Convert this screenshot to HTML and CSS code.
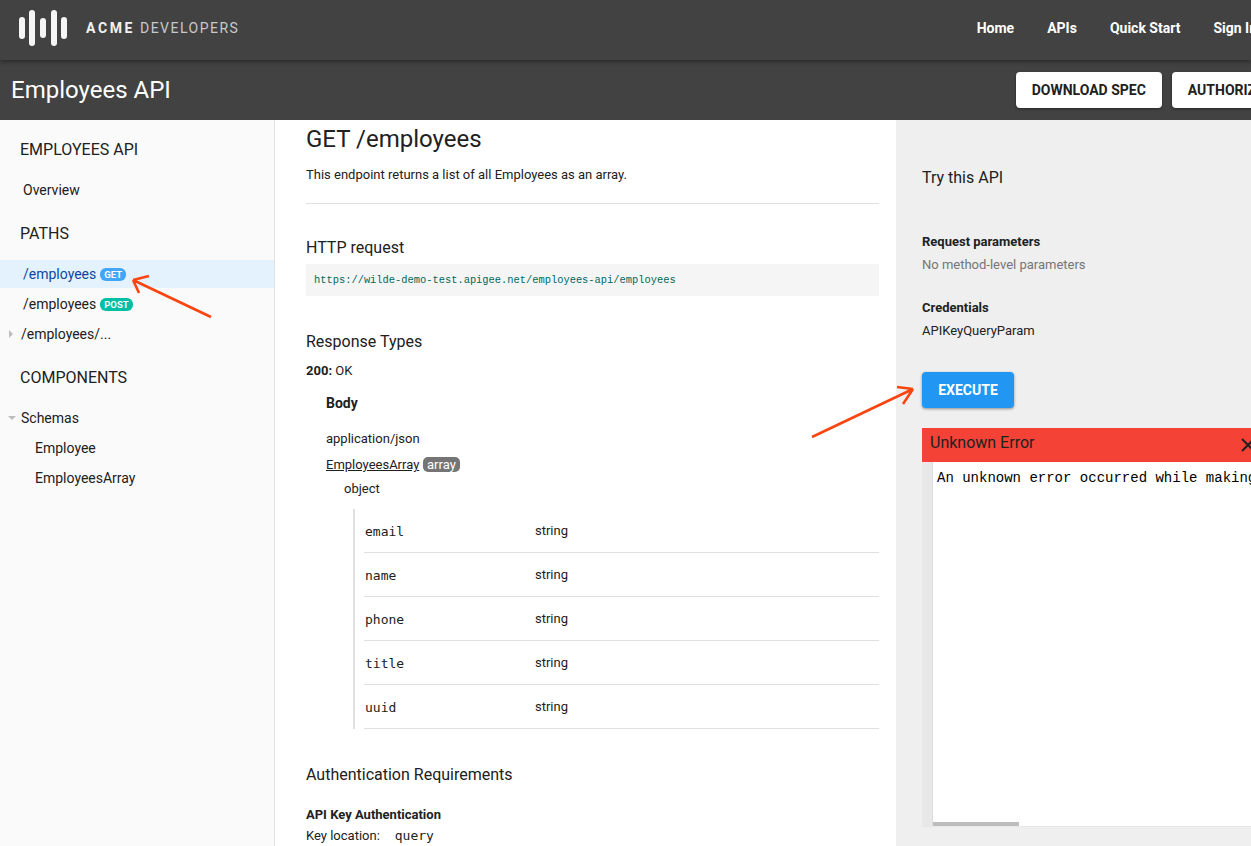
FILE: index.html
```html
<!DOCTYPE html>
<html lang="en">

<head>
    <meta charset="UTF-8">
    <meta name="viewport" content="width=device-width, initial-scale=1.0">
    <title>Employees API</title>
    <link rel="stylesheet" href="styles.css">
</head>

<body>
    <header class="topbar">
        <a class="logo">
            <svg class="logo-mark" width="50" height="36" viewBox="0 0 50 36">
                <rect x="1" y="7" width="6" height="22" rx="3" />
                <rect x="11" y="0" width="6" height="36" rx="3" />
                <rect x="22" y="8" width="6" height="20" rx="3" />
                <rect x="33" y="0" width="6" height="36" rx="3" />
                <rect x="43" y="7" width="6" height="22" rx="3" />
            </svg>
            <span class="logo-text"><b>ACME</b> DEVELOPERS</span>
        </a>
        <nav class="topnav">
            <a>Home</a>
            <a>APIs</a>
            <a>Quick Start</a>
            <a>Sign In</a>
        </nav>
    </header>

    <div class="titlebar">
        <h1>Employees API</h1>
        <div class="title-actions">
            <button class="btn-white">DOWNLOAD SPEC</button>
            <button class="btn-white">AUTHORIZE</button>
        </div>
    </div>

    <div class="layout">
        <aside class="sidebar">
            <h3>EMPLOYEES API</h3>
            <a class="side-link">Overview</a>
            <h3 class="side-gap">PATHS</h3>
            <a class="side-link active">/employees <span class="tag tag-get">GET</span></a>
            <a class="side-link">/employees <span class="tag tag-post">POST</span></a>
            <a class="side-link side-tree"><i class="caret"></i>/employees/...</a>
            <h3 class="side-gap2">COMPONENTS</h3>
            <a class="side-link side-tree"><i class="caret caret-open"></i>Schemas</a>
            <a class="side-link side-sub">Employee</a>
            <a class="side-link side-sub">EmployeesArray</a>
        </aside>

        <main class="content">
            <h2 class="page-title">GET /employees</h2>
            <p class="intro">This endpoint returns a list of all Employees as an array.</p>

            <h4 class="section-title http-title">HTTP request</h4>
            <div class="url-box">https://wilde-demo-test.apigee.net/employees-api/employees</div>

            <h4 class="section-title types-title">Response Types</h4>
            <p class="status"><b>200:</b> OK</p>
            <div class="body-block">
                <h5>Body</h5>
                <p class="mime">application/json</p>
                <p class="schema"><u>EmployeesArray</u> <span class="tag-array">array</span></p>
                <p class="object">object</p>
                <div class="props">
                    <div class="prop"><code>email</code><span>string</span></div>
                    <div class="prop"><code>name</code><span>string</span></div>
                    <div class="prop"><code>phone</code><span>string</span></div>
                    <div class="prop"><code>title</code><span>string</span></div>
                    <div class="prop"><code>uuid</code><span>string</span></div>
                </div>
            </div>

            <h4 class="section-title auth-title">Authentication Requirements</h4>
            <p class="auth-name">API Key Authentication</p>
            <p class="auth-key"><span>Key location:</span><code>query</code></p>
        </main>

        <section class="try-panel">
            <h4 class="try-title">Try this API</h4>
            <p class="try-label">Request parameters</p>
            <p class="try-muted">No method-level parameters</p>
            <p class="try-label cred-label">Credentials</p>
            <p class="try-value">APIKeyQueryParam</p>
            <button class="btn-execute">EXECUTE</button>
            <div class="error-head">
                <span>Unknown Error</span>
                <svg class="error-close" width="14" height="14" viewBox="0 0 14 14">
                    <path d="M1 1 L13 13 M13 1 L1 13" />
                </svg>
            </div>
            <div class="error-body">
                <div class="gutter"></div>
                <div class="error-output">
                    <pre>An unknown error occurred while making the request</pre>
                    <div class="scroll-thumb"></div>
                </div>
            </div>
        </section>
    </div>

    <!-- red annotation arrows on top of the screenshot -->
    <svg class="arrows" width="1251" height="846" viewBox="0 0 1251 846">
        <path d="M211 317 L133 280 M133 280 L149 276 M133 280 L139 293" />
        <path d="M812 437 L913 389 M913 389 L897 387 M913 389 L903 404" />
    </svg>
</body>

</html>
```

FILE: styles.css
```css
/* Basic reset */
* {
    margin: 0;
    padding: 0;
    box-sizing: border-box;
}

html,
body {
    height: 100%;
    overflow: hidden;
}

body {
    position: relative;
    width: 1251px;
    height: 846px;
    font-family: Roboto, sans-serif;
    font-size: 13px;
    color: #212121;
    background-color: #fff;
}

/* top bars */
.topbar {
    height: 60px;
    display: flex;
    align-items: center;
    background-color: #424242;
    color: #fff;
    padding-left: 18px;
    box-shadow: 0 2px 4px rgba(0, 0, 0, 0.35);
    position: relative;
    white-space: nowrap;
}

.logo {
    display: flex;
    align-items: center;
    height: 60px;
}

.logo-mark {
    fill: #f5f5f5;
    margin-right: 18px;
    margin-top: -5px;
}

.logo-text {
    font-size: 14px;
    letter-spacing: 1.5px;
    color: #c9c9c9;
    margin-top: -5px;
}

.logo-text b {
    color: #f2f2f2;
    letter-spacing: 2.6px;
    font-weight: 700;
}

.topnav {
    margin-left: auto;
    display: flex;
    gap: 33px;
    margin-right: -6px;
    font-size: 14px;
    font-weight: 700;
    margin-top: -4px;
}

.titlebar {
    height: 60px;
    display: flex;
    align-items: center;
    justify-content: space-between;
    background-color: #424242;
    color: #fff;
    padding-left: 11px;
    white-space: nowrap;
    overflow: hidden;
}

.titlebar h1 {
    font-size: 24px;
    font-weight: 400;
}

.title-actions {
    display: flex;
    gap: 10px;
    margin-right: -29px;
}

.btn-white {
    height: 36px;
    padding: 0 16px;
    background-color: #fff;
    color: #212121;
    border: none;
    border-radius: 4px;
    font-family: Roboto, sans-serif;
    font-size: 14px;
    font-weight: 700;
    box-shadow: 0 1px 3px rgba(0, 0, 0, 0.4);
}

.layout {
    display: flex;
    height: 726px;
}

/* left nav */
.sidebar {
    width: 275px;
    flex-shrink: 0;
    background-color: #fafafa;
    border-right: 1px solid #e0e0e0;
    padding-top: 19px;
    font-size: 14px;
}

.sidebar h3 {
    font-size: 16px;
    font-weight: 400;
    line-height: 22px;
    padding-left: 20px;
    margin-bottom: 14px;
}

.sidebar h3.side-gap {
    margin-top: 18px;
    margin-bottom: 15px;
}

.sidebar h3.side-gap2 {
    margin-top: 18px;
    margin-bottom: 14px;
}

.side-link {
    display: flex;
    align-items: center;
    gap: 4px;
    height: 30px;
    padding-left: 23px;
    color: #212121;
}

.side-link.active {
    height: 28px;
    margin-bottom: 1px;
    background-color: #e3f2fd;
    color: #0d47a1;
}

.side-tree {
    padding-left: 9px;
}

.side-sub {
    padding-left: 35px;
}

.caret {
    display: block;
    width: 0;
    height: 0;
    margin-right: 4px;
    border-left: 4px solid #bdbdbd;
    border-top: 4px solid transparent;
    border-bottom: 4px solid transparent;
}

.caret-open {
    border-top: 4px solid #bdbdbd;
    border-left: 4px solid transparent;
    border-right: 4px solid transparent;
    border-bottom: none;
    margin-right: 1px;
    margin-left: -1px;
}

.tag {
    font-size: 9.5px;
    font-weight: 700;
    line-height: 13px;
    padding: 0 4px;
    color: #fff;
    border-radius: 6px;
}

.tag-get {
    background-color: #42a5f5;
}

.tag-post {
    background-color: #00bfa5;
}

/* middle column */
.content {
    width: 621px;
    flex-shrink: 0;
    padding: 5px 17px 0 31px;
    overflow: hidden;
}

.page-title {
    font-size: 24px;
    font-weight: 400;
    line-height: 28px;
}

.intro {
    margin-top: 14px;
    line-height: 16px;
    padding-bottom: 20px;
    border-bottom: 1px solid #e0e0e0;
}

.section-title {
    font-size: 16px;
    font-weight: 400;
    line-height: 20px;
}

.http-title {
    margin-top: 34px;
}

.url-box {
    margin-top: 6px;
    height: 32px;
    padding-left: 8px;
    line-height: 32px;
    font-family: "Liberation Mono", monospace;
    font-size: 10.4px;
    color: #00695c;
    background-color: #f5f5f5;
}

.types-title {
    margin-top: 36px;
}

.status {
    margin-top: 10px;
    line-height: 18px;
}

.body-block {
    padding-left: 20px;
}

.body-block h5 {
    font-size: 14px;
    font-weight: 700;
    margin-top: 14px;
    line-height: 18px;
}

.mime {
    margin-top: 18px;
    line-height: 18px;
}

.schema {
    margin-top: 8px;
    line-height: 18px;
}

.tag-array {
    display: inline-block;
    line-height: 15px;
    padding: 0 4.5px;
    font-size: 13px;
    color: #fff;
    background-color: #757575;
    border-radius: 5px;
}

.object {
    margin-top: 6px;
    padding-left: 18px;
    line-height: 18px;
}

.props {
    margin: 11px 0 0 27px;
    border-left: 2px solid #e0e0e0;
    padding-left: 9px;
}

.prop {
    display: flex;
    align-items: center;
    height: 44px;
    border-bottom: 1px solid #e0e0e0;
}

.prop code {
    width: 171px;
    padding: 2px 0 0 1px;
    font-family: "DejaVu Sans Mono", monospace;
    font-size: 13px;
}

.auth-title {
    margin-top: 36px;
}

.auth-name {
    margin-top: 22px;
    font-size: 13px;
    font-weight: 700;
    line-height: 16px;
}

.auth-key {
    display: flex;
    gap: 15px;
    margin-top: 5px;
    line-height: 16px;
}

.auth-key code {
    font-family: "DejaVu Sans Mono", monospace;
    font-size: 13px;
}

/* right panel */
.try-panel {
    flex: 1;
    min-width: 0;
    padding: 48px 0 0 26px;
    background-color: #efefef;
    overflow: hidden;
}

.try-title {
    font-size: 16px;
    font-weight: 400;
    line-height: 20px;
}

.try-label {
    margin-top: 46px;
    font-size: 13px;
    font-weight: 700;
    line-height: 16px;
}

.try-muted {
    margin-top: 7px;
    line-height: 16px;
    color: #757575;
}

.try-label.cred-label {
    margin-top: 27px;
}

.try-value {
    margin-top: 7px;
    line-height: 16px;
}

.btn-execute {
    display: block;
    width: 92px;
    height: 36px;
    margin-top: 33px;
    background-color: #2196f3;
    color: #fff;
    border: none;
    border-radius: 4px;
    font-family: Roboto, sans-serif;
    font-size: 14px;
    font-weight: 700;
    box-shadow: 0 1px 3px rgba(0, 0, 0, 0.4);
}

.error-head {
    display: flex;
    align-items: flex-start;
    height: 34px;
    margin-top: 20px;
    padding: 5px 0 0 8px;
    line-height: 20px;
    width: 340px;
    background-color: #f44336;
    font-size: 16px;
    white-space: nowrap;
}

.error-close {
    stroke: #212121;
    stroke-width: 2;
    fill: none;
    margin-top: 5px;
    margin-left: auto;
    margin-right: 7px;
    flex-shrink: 0;
}

.error-body {
    display: flex;
    height: 365px;
    width: 340px;
    border-bottom: 1px solid #e8e8e8;
}

.gutter {
    width: 11px;
    background-color: #e8e8e8;
    border-right: 1px solid #ddd;
}

.error-output {
    flex: 1;
    position: relative;
    background-color: #fff;
    padding: 8px 0 0 4px;
    overflow: hidden;
}

.error-output pre {
    font-family: "Liberation Mono", monospace;
    font-size: 14px;
    line-height: 16px;
    color: #000;
}

.scroll-thumb {
    position: absolute;
    left: 0;
    bottom: 0;
    width: 86px;
    height: 4px;
    background-color: #bdbdbd;
}

/* annotation arrows */
.arrows {
    position: absolute;
    left: 0;
    top: 0;
    pointer-events: none;
    fill: none;
    stroke: #fb4510;
    stroke-width: 2.6;
}
```
